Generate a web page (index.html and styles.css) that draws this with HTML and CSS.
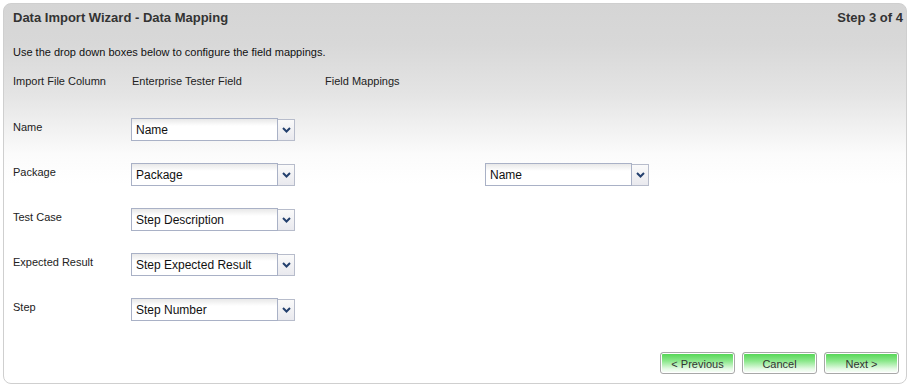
FILE: index.html
```html
<!DOCTYPE html>
<html lang="en">
<head>
    <meta charset="UTF-8">
    <title>Data Import Wizard - Data Mapping</title>
    <link rel="stylesheet" href="styles.css">
</head>
<body>
    <div class="wizard">
        <!-- Cabeçalho -->
        <div class="wizard-header">
            <span class="wizard-title">Data Import Wizard - Data Mapping</span>
            <span class="wizard-step">Step 3 of 4</span>
        </div>

        <div class="wizard-body">
            <p class="intro">Use the drop down boxes below to configure the field mappings.</p>

            <div class="row columns">
                <span class="col-label">Import File Column</span>
                <span class="col-field">Enterprise Tester Field</span>
                <span class="col-map">Field Mappings</span>
            </div>

            <div class="row mapping">
                <span class="col-label">Name</span>
                <div class="col-field">
                    <div class="combo"><span class="combo-text">Name</span><span class="combo-btn"><svg width="9" height="6" viewBox="0 0 9 6"><path d="M1 1l3.5 3.5L8 1" fill="none" stroke="#24406e" stroke-width="2"/></svg></span></div>
                </div>
            </div>

            <div class="row mapping">
                <span class="col-label">Package</span>
                <div class="col-field">
                    <div class="combo"><span class="combo-text">Package</span><span class="combo-btn"><svg width="9" height="6" viewBox="0 0 9 6"><path d="M1 1l3.5 3.5L8 1" fill="none" stroke="#24406e" stroke-width="2"/></svg></span></div>
                </div>
                <div class="col-extra">
                    <div class="combo"><span class="combo-text">Name</span><span class="combo-btn"><svg width="9" height="6" viewBox="0 0 9 6"><path d="M1 1l3.5 3.5L8 1" fill="none" stroke="#24406e" stroke-width="2"/></svg></span></div>
                </div>
            </div>

            <div class="row mapping">
                <span class="col-label">Test Case</span>
                <div class="col-field">
                    <div class="combo"><span class="combo-text">Step Description</span><span class="combo-btn"><svg width="9" height="6" viewBox="0 0 9 6"><path d="M1 1l3.5 3.5L8 1" fill="none" stroke="#24406e" stroke-width="2"/></svg></span></div>
                </div>
            </div>

            <div class="row mapping">
                <span class="col-label">Expected Result</span>
                <div class="col-field">
                    <div class="combo"><span class="combo-text">Step Expected Result</span><span class="combo-btn"><svg width="9" height="6" viewBox="0 0 9 6"><path d="M1 1l3.5 3.5L8 1" fill="none" stroke="#24406e" stroke-width="2"/></svg></span></div>
                </div>
            </div>

            <div class="row mapping">
                <span class="col-label">Step</span>
                <div class="col-field">
                    <div class="combo"><span class="combo-text">Step Number</span><span class="combo-btn"><svg width="9" height="6" viewBox="0 0 9 6"><path d="M1 1l3.5 3.5L8 1" fill="none" stroke="#24406e" stroke-width="2"/></svg></span></div>
                </div>
            </div>
        </div>

        <!-- Botões -->
        <div class="wizard-footer">
            <button class="btn">&lt; Previous</button>
            <button class="btn">Cancel</button>
            <button class="btn">Next &gt;</button>
        </div>
    </div>
</body>
</html>
```

FILE: styles.css
```css
body {
    margin: 0;
    padding: 3px 0 0 3px;
    background: #fff;
    font-family: 'Liberation Sans', Arial, sans-serif;
    color: #222;
    overflow: hidden;
}

.wizard {
    width: 904px;
    height: 381px;
    box-sizing: border-box;
    border: 1px solid #cfcfcf;
    border-radius: 8px;
    background: linear-gradient(#d5d5d5 0, #d8d8d8 40px, #e4e4e4 90px, #fbfbfb 150px, #ffffff 180px);
    display: flex;
    flex-direction: column;
}

.wizard-header {
    height: 26px;
    display: flex;
    justify-content: space-between;
    align-items: center;
    padding: 0 3px 0 9px;
    font-size: 13px;
    font-weight: bold;
    color: #333;
}

.wizard-body {
    flex: 1;
    padding: 0 9px;
    font-size: 11px;
}

.intro {
    margin: 16px 0 0 0;
    color: #111;
}

.row {
    display: flex;
    align-items: flex-start;
}

.columns {
    margin-top: 17px;
    color: #222;
}

.col-label {
    width: 118px;
    flex: none;
}

.col-field {
    width: 194px;
    flex: none;
}

.columns .col-label {
    width: 119px;
}

.columns .col-field {
    width: 193px;
}

.mapping {
    height: 45px;
    color: #222;
}

.columns + .mapping {
    margin-top: 32px;
}

.mapping .col-label {
    padding-top: 2px;
}

.mapping .col-field {
    margin-top: -1px;
}

.col-extra {
    margin-left: 160px;
    margin-top: -1px;
}

/* Caixa de seleção */
.combo {
    display: flex;
    width: 164px;
    height: 23px;
}

.combo-text {
    flex: 1;
    box-sizing: border-box;
    border: 1px solid #a9b1c6;
    background: linear-gradient(#e8e8e8 0, #fff 7px, #fff 100%);
    font-size: 12px;
    color: #111;
    padding: 4px 0 0 4px;
}

.combo-btn {
    width: 17px;
    box-sizing: border-box;
    border: 1px solid #b7bccb;
    border-left: none;
    margin-top: 1px;
    background: linear-gradient(#fafafa, #e9e9ee);
    display: flex;
    justify-content: center;
    align-items: center;
}

.wizard-footer {
    display: flex;
    justify-content: flex-end;
    gap: 7px;
    padding: 0 7px 9px 0;
}

.btn {
    width: 75px;
    height: 22px;
    border: 1px solid #a8a8a8;
    border-radius: 3px;
    background: linear-gradient(#4fd44f 0, #8be88b 8px, #e6fae6 16px, #fbfffb 100%);
    box-shadow: inset 0 0 0 1px #fff;
    font-family: 'Liberation Sans', Arial, sans-serif;
    font-size: 11px;
    color: #333;
    padding: 1px 0 0 0;
}
```
